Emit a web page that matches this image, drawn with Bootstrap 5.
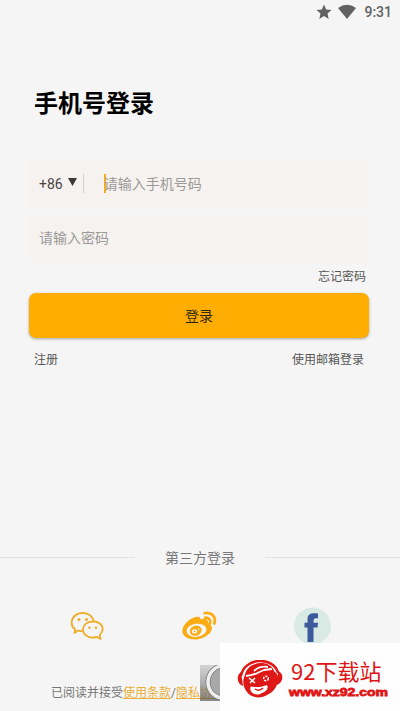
<!DOCTYPE html>
<html lang="zh-CN">
<head>
<meta charset="utf-8">
<meta name="viewport" content="width=device-width, initial-scale=1">
<title>手机号登录</title>
<link href="https://cdn.jsdelivr.net/npm/bootstrap@5.3.0/dist/css/bootstrap.min.css" rel="stylesheet">
<style>
body{background:#f5f5f5;font-family:Roboto,"Noto Sans CJK SC",sans-serif;color:#555;font-size:12px;line-height:18px}
.screen{height:711px;width:400px}
.status{height:24px;font-size:14px;color:#616161;padding-right:8px}
.wifi{margin:0 8px 0 6px}
.page-title{font-size:24px;line-height:36px;color:#000;margin:62px 0 38px 34px}
.forms{margin:0 31px 0 30px}
.field{background:#f6f2ef;height:49px;font-size:14px;color:#999;padding:0 0 2px 9px}
.field-pass{height:46px;margin-top:7px}
.code{color:#4a4542}
.arrow{margin:0 6px 3px 5px}
.rule{width:1px;height:19px;background:#d0cdca}
.caret{width:2px;height:19px;background:#f0ae22;margin:0 -2px 0 20px}
.forgot{margin:6px 34px 0 0}
.btn-login,.btn-login:hover{background:#ffad00;color:#302414;height:45px;margin:7px 31px 0 29px;border:0;border-radius:7px;font-size:14px;box-shadow:0 1px 3px #0005}
.btn-login.btn{padding:2px 0 0}
.links{margin:13px 36px 0 34px}
.third{margin-top:179px;font-size:14px;line-height:21px;color:#777}
.hair{height:1px;background:#e2e2e2;width:135px;margin-bottom:2px}
.socials{margin-top:38px;height:38px;padding:0 69px 0 70px}
.terms{margin:39px 0 0 51px;height:18px;color:#757575;white-space:nowrap}
.terms a{color:#ebae35}
.preview{left:200px;top:665px}
.stamp{left:220px;top:643px;width:180px;height:68px;background:#fefefe;padding-left:17px}
.stamp-name{font-family:"Noto Sans CJK SC",sans-serif;font-size:22px;line-height:27px;color:#df1515;padding-left:4px;margin-top:4px}
</style>
</head>
<body>
<main class="screen d-flex flex-column position-relative overflow-hidden">
  <div class="status d-flex align-items-center justify-content-end flex-shrink-0 fw-medium">
    <svg width="16" height="16" viewBox="0 0 16 16"><path fill="#616161" d="M8 .5l2.200 5 5.300.5-4 3.600 1.200 5.400L8 12.100 3.300 15l1.200-5.400L.5 6l5.300-.5z"/></svg>
    <svg class="wifi" width="18" height="16" viewBox="0 0 18 16"><path fill="#616161" d="M0 4Q9-2.500 18 4L9 15z"/></svg>
    <span>9:31</span>
  </div>
  <h1 class="page-title fw-bold">手机号登录</h1>
  <section class="forms">
    <div class="field d-flex align-items-center">
      <span class="code">+86</span>
      <svg class="arrow" width="9" height="8" viewBox="0 0 9 8"><path fill="#3c3835" d="M0 0h9L4.500 8z"/></svg>
      <span class="rule"></span><span class="caret"></span><span>请输入手机号码</span>
    </div>
    <div class="field field-pass d-flex align-items-center">请输入密码</div>
  </section>
  <div class="forgot text-end">忘记密码</div>
  <button class="btn btn-login">登录</button>
  <div class="links d-flex justify-content-between"><span>注册</span><span>使用邮箱登录</span></div>
  <div class="third d-flex align-items-center justify-content-between"><span class="hair"></span><span>第三方登录</span><span class="hair"></span></div>
  <div class="socials d-flex align-items-center justify-content-between">
    <svg width="34" height="30" viewBox="0 0 34 30" fill="none" stroke="#efad2c" stroke-width="1.800" stroke-linejoin="round">
      <path d="M12.400 20Q9.500 20.300 7.800 19.500L4.500 22 5 18.200C-1.500 13 2 2 12.800 2 19 2 23 6 23.600 10.400"/>
      <path d="M22.800 10.500C16.800 10.500 13 14.200 13 18.500c0 6.700 8.200 9.500 13.500 7.300L30.500 28l-.8-4.200C36 18.200 31.500 10.500 22.800 10.500z"/>
      <g fill="#efad2c" stroke="none"><circle cx="9" cy="8.500" r="1.600"/><circle cx="16.500" cy="8.500" r="1.600"/><circle cx="19.500" cy="16.800" r="1.300"/><circle cx="26" cy="16.800" r="1.300"/></g>
    </svg>
    <svg width="36" height="32" viewBox="-1 0 36 32">
      <path fill="#fcab12" d="M11 8c4-2 8-1.500 7.500 1.500 4-1.500 8-.7 7.500 3.200 6 2.800 4.500 8.800-.5 12.300C18 31.500 3 31 .5 22.500-.8 17 5 10.500 11 8z"/>
      <ellipse cx="14.500" cy="20.300" rx="10" ry="6.600" fill="#f5f5f5" transform="rotate(-7 14.500 20.300)"/>
      <ellipse cx="13.700" cy="20.700" rx="6" ry="5" fill="#fcab12" transform="rotate(-20 13.700 20.700)"/>
      <ellipse cx="12.700" cy="21.400" rx="2.700" ry="2.100" fill="#f5f5f5"/><circle cx="12.700" cy="21.400" r=".8" fill="#fcab12"/><circle cx="16.500" cy="19.300" r=".8" fill="#f5f5f5"/>
      <path fill="none" stroke="#fcab12" stroke-width="2.700" stroke-linecap="round" d="M22.500 3.200C29.500 1.500 34.500 7 32.300 13.500M23 7.800c3.500-.7 6 2 5 5.200"/>
    </svg>
    <svg width="37" height="38" viewBox="0 0 37 38"><circle cx="18.500" cy="19" r="18.500" fill="#d9e9e4"/><path fill="#3c5a9c" d="M13.500 35V20.500h-3v-4.800h3V12c0-4.500 3-6.500 10.500-5.500v4.800c-3.800-.4-4.500.2-4.500 4.400H24l-.5 4.800h-4V35z"/></svg>
  </div>
  <div class="terms">已阅读并接受<a href="#">使用条款</a>/<a href="#">隐私协议</a></div>
  <svg class="preview position-absolute" width="20" height="36" viewBox="0 0 20 36">
    <defs><linearGradient id="shade" x2="0" y2="1"><stop stop-color="#c0c0c0"/><stop offset="1" stop-color="#444"/></linearGradient></defs>
    <path fill="url(#shade)" fill-opacity=".62" d="M0 0h20v36H0z"/>
    <ellipse cx="23" cy="17" rx="15" ry="16" fill="#a8a8a8" stroke="#777" stroke-width="5"/><ellipse cx="23" cy="17" rx="15" ry="16" fill="none" stroke="#eee" stroke-width="3.500"/>
  </svg>
  <aside class="stamp position-absolute d-flex align-items-center">
    <svg width="46" height="38" viewBox="0 0 46 38" class="flex-shrink-0 mt-1">
      <path fill="none" stroke="#de1717" stroke-width="2.500" d="M4 16C7-3 37-4 41 13"/>
      <path fill="#de1717" d="M4 12c-5 3-4 12 2 14zM41 11c6 2 6 11-1 14zM8 15C10 1 33-1 37 11l3 3c3 9-2 18-10 21-6 4-16 3-20-3-4-5-5-11-2-17z"/>
      <path fill="none" stroke="#fff" stroke-width="1.800" d="M9 16C17 16 21 12 27 10l8-1M17 11c4-4 8-5 14-4"/>
      <path fill="#fff" d="M14 26c-3 6 4 10 9 8 6-2 9-5 7-9-5 2-11 3-16 1z"/>
      <path fill="#de1717" d="M10 17c6-2 10 2 14-1 5-3 10-3 11 2 1 6-5 8-10 6-4 0-7 4-12 2-4-2-5-7-3-9z"/>
      <path fill="none" stroke="#fff" stroke-width="1.600" d="M12 18l6 5M18 18l-5 5"/><circle cx="29" cy="18.500" r="2.300" fill="none" stroke="#fff" stroke-width="1.500" stroke-dasharray="2 1"/>
      <path fill="none" stroke="#de1717" stroke-width="1.500" d="M18 29c3 2 6 1 8-1"/>
    </svg>
    <div class="ms-1"><div class="stamp-name">92下载站</div>
    <svg class="d-block" width="102" height="17" viewBox="0 0 102 17"><text x="2" y="11.500" textLength="99" lengthAdjust="spacingAndGlyphs" font-family="Liberation Sans" font-size="11" font-weight="bold" fill="#df1515" stroke="#df1515" stroke-width=".8">www.xz92.com</text></svg></div>
  </aside>
</main>
<script src="https://cdn.jsdelivr.net/npm/bootstrap@5.3.0/dist/js/bootstrap.bundle.min.js"></script>
</body>
</html>
